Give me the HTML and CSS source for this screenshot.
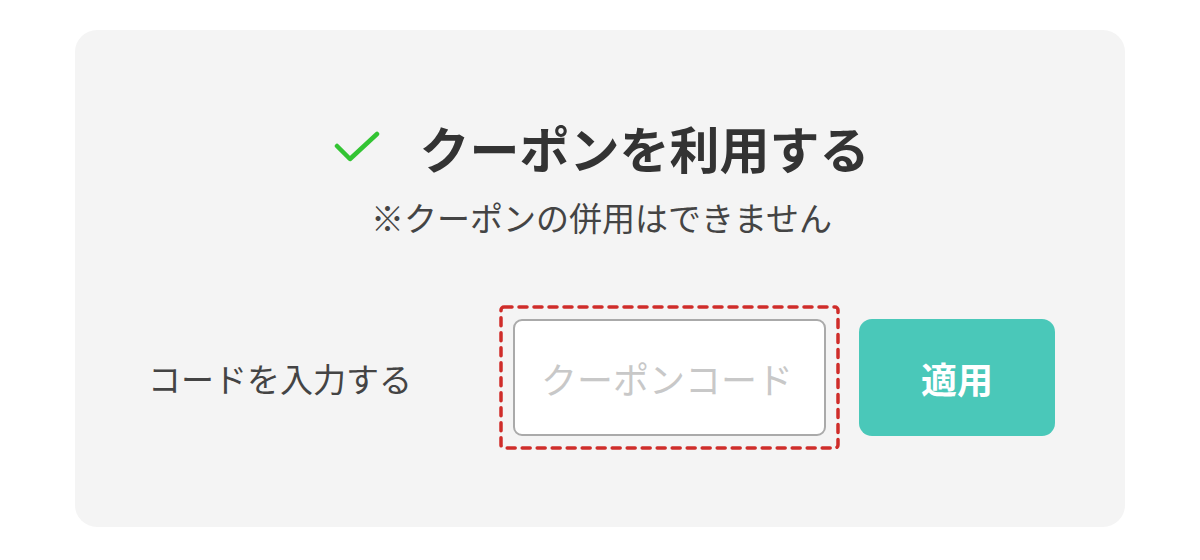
FILE: index.html
```html
<!DOCTYPE html>
<html lang="ja">
<head>
    <meta charset="UTF-8">
    <meta name="viewport" content="width=device-width, initial-scale=1.0">
    <title>クーポン</title>
    <link rel="stylesheet" href="styles.css">
</head>
<body>
    <div class="card">
        <h2 class="title">
            <svg class="check" width="46" height="32" viewBox="0 0 46 32">
                <path d="M3 15 L16 28 L43 3" fill="none" stroke="#33c433" stroke-width="4.5" stroke-linecap="round" stroke-linejoin="round"/>
            </svg>
            <span>クーポンを利用する</span>
        </h2>
        <p class="note">※クーポンの併用はできません</p>
        <div class="row">
            <label class="label" for="code">コードを入力する</label>
            <div class="focus">
                <input id="code" class="input" type="text" placeholder="クーポンコード">
                <!-- dashed highlight round the field -->
                <svg class="dash" width="341" height="145">
                    <rect x="2" y="2" width="337" height="141" rx="3" fill="none" stroke="#cf2d2a" stroke-width="3.5" stroke-dasharray="8 7" stroke-linecap="round"/>
                </svg>
            </div>
            <button class="apply">適用</button>
        </div>
    </div>
</body>
</html>
```

FILE: styles.css
```css
body { margin: 0; background: #fff; font-family: "Noto Sans CJK JP", "Noto Sans", sans-serif; color: #333; }
.card { margin: 30px 75px 0; height: 497px; box-sizing: border-box; padding: 87px 70px 0 73px; background: #f4f4f4; border-radius: 22px; }
.title { display: flex; align-items: center; justify-content: center; gap: 40px; margin: 0; font-size: 50px; line-height: 60px; font-weight: bold; color: #333; }
.check { margin-top: 0; }
.note { margin: 16px 0 0; text-align: center; font-size: 33px; line-height: 48px; color: #444; }
.row { display: flex; align-items: center; margin-top: 64px; }
.label { width: 351px; font-size: 33px; color: #444; }
.focus { position: relative; padding: 14px; }
.dash { position: absolute; left: 0; top: 0; pointer-events: none; }
.input { display: block; width: 313px; height: 117px; box-sizing: border-box; border: 2px solid #aaa; border-radius: 9px; background: #fff; padding: 0 0 0 26px; font-family: inherit; font-size: 36px; color: #333; outline: none; }
.input::placeholder { color: #c8c8c8; }
.apply { margin-left: 19px; width: 196px; height: 117px; border: none; border-radius: 13px; background: #4ac8b9; color: #fff; font-family: inherit; font-size: 36px; font-weight: bold; cursor: pointer; }
```
